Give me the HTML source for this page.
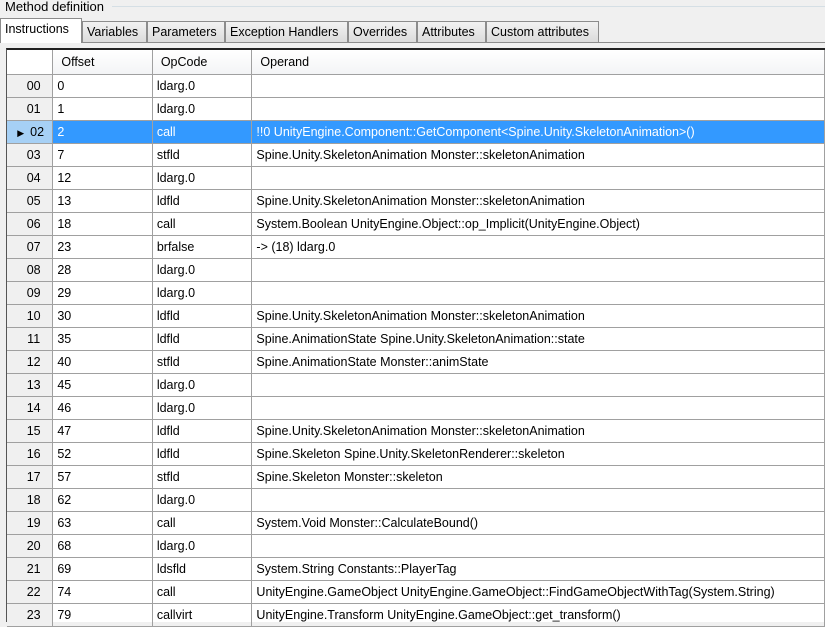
<!DOCTYPE html>
<html><head><style>
*{margin:0;padding:0;box-sizing:border-box}
body{width:825px;height:622px;overflow:hidden;background:#f0f0f0;font-family:"Liberation Sans",Tahoma,sans-serif;font-size:12px;color:#000;position:relative}
.gl{position:absolute;top:6px;left:112px;right:0;height:1px;background:#d5dfe5}
.gt{position:absolute;left:5px;top:-1px;font-size:13px}
.tab{position:absolute;top:21px;height:22px;border:1px solid #8c8c8c;border-bottom:none;background:linear-gradient(#f2f2f2,#dadada);padding:3px 3px 0 4px;font-size:12.5px}
.tab.a{top:18px;height:25px;background:#fff;left:0;padding-top:3px}
.tl{position:absolute;left:81px;top:42px;right:0;height:1px;background:#8c8c8c}
.grid{position:absolute;left:6px;top:48px;right:0;bottom:0;background:#fff;border-left:1px solid #555;border-top:2px solid #222}
table{border-collapse:collapse;table-layout:fixed;position:absolute;left:0;top:0}
td{height:23px;border-right:1px solid #a0a0a0;border-bottom:1px solid #a0a0a0;padding-left:4px;white-space:nowrap;overflow:hidden;font-size:12.5px}
tr.h td{height:24px;background:linear-gradient(#fff,#f3f4f6);border-bottom:1px solid #a0a0a0;padding-left:8px}
td.r{background:#f0f0f0;text-align:center;padding-left:8px}
tr.s td{background:#3399ff;color:#fff}
tr.s td.r{background:#a6d0f5;color:#000}
</style></head><body>
<div class="gl"></div><div class="gt">Method definition</div>
<div class="tab a" style="width:82px">Instructions</div>
<div class="tab" style="left:82px;width:65px">Variables</div>
<div class="tab" style="left:147px;width:78px">Parameters</div>
<div class="tab" style="left:225px;width:123px">Exception Handlers</div>
<div class="tab" style="left:348px;width:69px">Overrides</div>
<div class="tab" style="left:417px;width:69px">Attributes</div>
<div class="tab" style="left:486px;width:113px">Custom attributes</div>
<div class="tl"></div>
<div class="grid"><table>
<colgroup><col style="width:46px"><col style="width:100px"><col style="width:100px"><col style="width:573px"></colgroup>
<tr class="h"><td style="background:#fff"></td><td>Offset</td><td>OpCode</td><td>Operand</td></tr>
<tr><td class="r">00</td><td>0</td><td>ldarg.0</td><td></td></tr>
<tr><td class="r">01</td><td>1</td><td>ldarg.0</td><td></td></tr>
<tr class="s"><td class="r"><span style="font-size:9px;position:relative;left:-6px">&#9654;</span>02</td><td>2</td><td>call</td><td>!!0 UnityEngine.Component::GetComponent&lt;Spine.Unity.SkeletonAnimation&gt;()</td></tr>
<tr><td class="r">03</td><td>7</td><td>stfld</td><td>Spine.Unity.SkeletonAnimation Monster::skeletonAnimation</td></tr>
<tr><td class="r">04</td><td>12</td><td>ldarg.0</td><td></td></tr>
<tr><td class="r">05</td><td>13</td><td>ldfld</td><td>Spine.Unity.SkeletonAnimation Monster::skeletonAnimation</td></tr>
<tr><td class="r">06</td><td>18</td><td>call</td><td>System.Boolean UnityEngine.Object::op_Implicit(UnityEngine.Object)</td></tr>
<tr><td class="r">07</td><td>23</td><td>brfalse</td><td>-&gt; (18) ldarg.0</td></tr>
<tr><td class="r">08</td><td>28</td><td>ldarg.0</td><td></td></tr>
<tr><td class="r">09</td><td>29</td><td>ldarg.0</td><td></td></tr>
<tr><td class="r">10</td><td>30</td><td>ldfld</td><td>Spine.Unity.SkeletonAnimation Monster::skeletonAnimation</td></tr>
<tr><td class="r">11</td><td>35</td><td>ldfld</td><td>Spine.AnimationState Spine.Unity.SkeletonAnimation::state</td></tr>
<tr><td class="r">12</td><td>40</td><td>stfld</td><td>Spine.AnimationState Monster::animState</td></tr>
<tr><td class="r">13</td><td>45</td><td>ldarg.0</td><td></td></tr>
<tr><td class="r">14</td><td>46</td><td>ldarg.0</td><td></td></tr>
<tr><td class="r">15</td><td>47</td><td>ldfld</td><td>Spine.Unity.SkeletonAnimation Monster::skeletonAnimation</td></tr>
<tr><td class="r">16</td><td>52</td><td>ldfld</td><td>Spine.Skeleton Spine.Unity.SkeletonRenderer::skeleton</td></tr>
<tr><td class="r">17</td><td>57</td><td>stfld</td><td>Spine.Skeleton Monster::skeleton</td></tr>
<tr><td class="r">18</td><td>62</td><td>ldarg.0</td><td></td></tr>
<tr><td class="r">19</td><td>63</td><td>call</td><td>System.Void Monster::CalculateBound()</td></tr>
<tr><td class="r">20</td><td>68</td><td>ldarg.0</td><td></td></tr>
<tr><td class="r">21</td><td>69</td><td>ldsfld</td><td>System.String Constants::PlayerTag</td></tr>
<tr><td class="r">22</td><td>74</td><td>call</td><td>UnityEngine.GameObject UnityEngine.GameObject::FindGameObjectWithTag(System.String)</td></tr>
<tr><td class="r">23</td><td>79</td><td>callvirt</td><td>UnityEngine.Transform UnityEngine.GameObject::get_transform()</td></tr>
</table></div>
</body></html>
